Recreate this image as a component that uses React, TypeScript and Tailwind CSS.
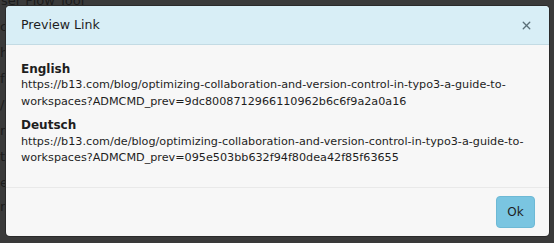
import { X } from "lucide-react";

const links = [
    {
        label: "English",
        url: "https://b13.com/blog/optimizing-collaboration-and-version-control-in-typo3-a-guide-to-workspaces?ADMCMD_prev=9dc8008712966110962b6c6f9a2a0a16",
    },
    {
        label: "Deutsch",
        url: "https://b13.com/de/blog/optimizing-collaboration-and-version-control-in-typo3-a-guide-to-workspaces?ADMCMD_prev=095e503bb632f94f80dea42f85f63655",
    },
];

function BackgroundPage() {
    return (
        <div className="absolute inset-0 bg-[#3a3a3a] text-[13px] leading-[26px] text-[#1c1c1c] -mt-[12px]">
            <p className="pl-[1px]">ser Flow Tool</p>
            <p>c</p>
            <p>h</p>
            <p>f</p>
            <p>/</p>
            <p>r</p>
            <p>t</p>
            <p>e</p>
            <p className="-mt-[2px]">rises should expect when...</p>
        </div>
    );
}

export default function App() {
    return (
        <div
            className="relative w-[554px] h-[243px] overflow-hidden"
            style={{ fontFamily: "Verdana, 'DejaVu Sans', sans-serif" }}
        >
            <BackgroundPage />
            <div className="absolute left-[6px] top-[6px] w-[543px] h-[230px] flex flex-col rounded-[4px] overflow-hidden bg-[#f7f7f7] shadow-[0_0_0_1px_#2a2a2a] text-[#1e1e1e]">
                <div className="flex items-center justify-between h-[39px] px-[15px] bg-[#d8eef6] border-b border-[#c3dbe4]">
                    <h2 className="text-[12.6px]">Preview Link</h2>
                    <button className="text-[#5a6f78] mr-[1px]">
                        <X size={13} strokeWidth={2.5} />
                    </button>
                </div>
                <div className="flex-1 px-[15px] pt-[16px] text-[11.2px] leading-[16.4px]">
                    {links.map((link) => (
                        <div key={link.label} className="mb-[7px]">
                            <p className="font-bold text-[12px]">{link.label}</p>
                            <p className="break-words">{link.url}</p>
                        </div>
                    ))}
                </div>
                <div className="flex justify-end px-[14px] py-[8px] border-t border-[#e9e9e9]">
                    <button className="w-[39px] h-[32px] rounded-[4px] bg-[#7ac5e1] border border-[#6db9d5] text-[12px] text-[#1e1e1e]">
                        Ok
                    </button>
                </div>
            </div>
        </div>
    );
}
